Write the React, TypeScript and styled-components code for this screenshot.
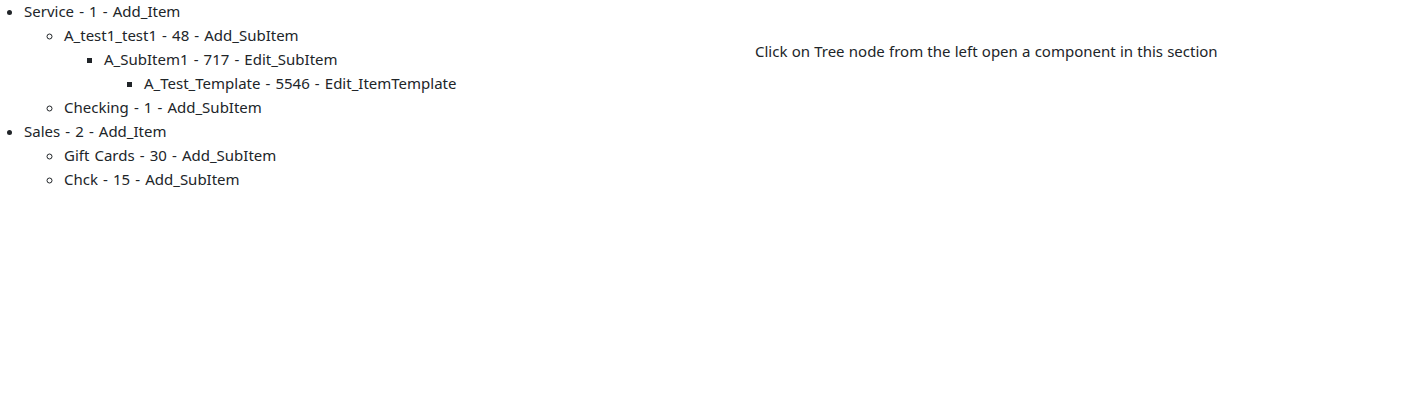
import React from "react";
import styled, { createGlobalStyle } from "styled-components";

const Global = createGlobalStyle`
  html, body { margin: 0; padding: 0; background: #fff; }
  body {
    font-family: "Noto Sans", "Open Sans", sans-serif;
    font-size: 15px;
    line-height: 24px;
    color: #212529;
  }
`;

const Page = styled.div`
  display: flex;
  align-items: flex-start;
  width: 100%;
`;

const LeftPane = styled.div`
  width: 707px;
  flex: none;
  margin-top: -1px;
  word-spacing: 1.2px;
`;

const RightPane = styled.div`
  flex: 1;
  padding: 39px 0 0 48px;
  word-spacing: 0.3px;
`;

const TreeList = styled.ul<{ $level: number }>`
  margin: 0;
  padding-left: ${(p) => (p.$level === 0 ? 24 : 40)}px;
  list-style-type: ${(p) =>
    p.$level === 0 ? "disc" : p.$level === 1 ? "circle" : "square"};
`;

const Node = styled.li`
  cursor: pointer;
  white-space: nowrap;
`;

const Hint = styled.div`
  white-space: nowrap;
`;

type TreeNode = { label: string; children?: TreeNode[] };

const data: TreeNode[] = [
  {
    label: "Service - 1 - Add_Item",
    children: [
      {
        label: "A_test1_test1 - 48 - Add_SubItem",
        children: [
          {
            label: "A_SubItem1 - 717 - Edit_SubItem",
            children: [{ label: "A_Test_Template - 5546 - Edit_ItemTemplate" }],
          },
        ],
      },
      { label: "Checking - 1 - Add_SubItem" },
    ],
  },
  {
    label: "Sales - 2 - Add_Item",
    children: [
      { label: "Gift Cards - 30 - Add_SubItem" },
      { label: "Chck - 15 - Add_SubItem" },
    ],
  },
];

const Tree: React.FC<{ nodes: TreeNode[]; level: number }> = ({ nodes, level }) => (
  <TreeList $level={level}>
    {nodes.map((n) => (
      <Node key={n.label}>
        {n.label}
        {n.children && <Tree nodes={n.children} level={level + 1} />}
      </Node>
    ))}
  </TreeList>
);

export default function App() {
  return (
    <>
      <Global />
      <Page>
        <LeftPane>
          <Tree nodes={data} level={0} />
        </LeftPane>
        <RightPane>
          <Hint>Click on Tree node from the left open a component in this section</Hint>
        </RightPane>
      </Page>
    </>
  );
}
